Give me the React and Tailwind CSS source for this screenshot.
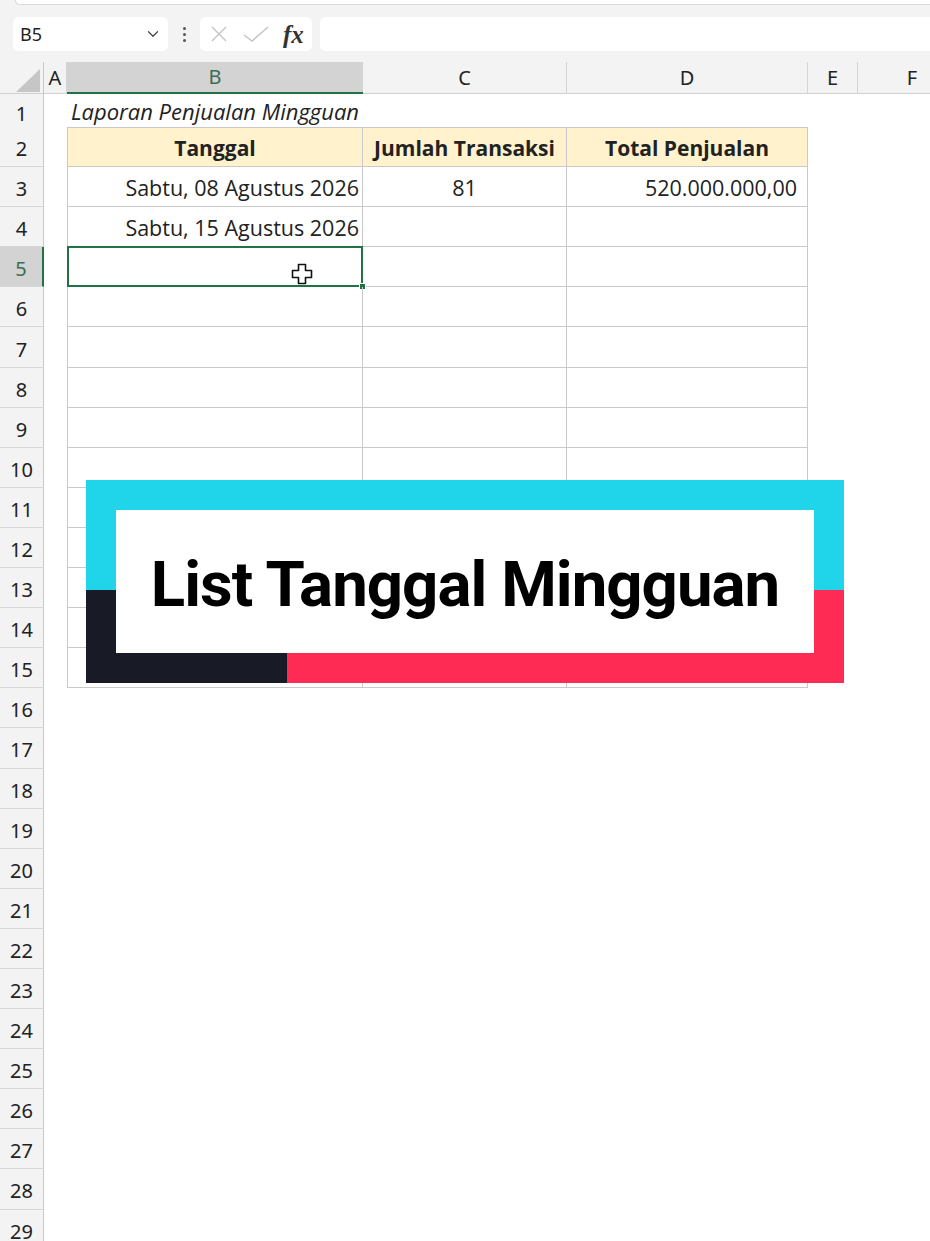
import { ChevronDown } from "lucide-react";

const COLS = "grid grid-cols-[44px_23px_296px_204px_241px_50px_108px]";
const cellFont = { fontFamily: "'Open Sans', sans-serif" };
const uiFont = { fontFamily: "'Noto Sans', 'Open Sans', sans-serif" };

const tableRows = {
  2: { b: "Tanggal", c: "Jumlah Transaksi", d: "Total Penjualan", head: true },
  3: { b: "Sabtu, 08 Agustus 2026", c: "81", d: "520.000.000,00" },
  4: { b: "Sabtu, 15 Agustus 2026", c: "", d: "" },
};

// Toolbar with name box, function buttons and formula bar
const FormulaBar = () => (
  <div className="h-[62px] bg-[#f3f3f3]">
    <div className="ml-[15px] h-[5px] rounded-bl-[10px] border-b border-l border-[#dadada] bg-white" />
    <div className="mt-[12px] flex items-center" style={uiFont}>
      <div className="ml-[13px] flex h-[34px] w-[155px] items-center justify-between rounded-md bg-white pl-[7px] pr-[6px] text-[18px] text-[#222]">
        <span>B5</span>
        <ChevronDown size={18} strokeWidth={1.6} className="text-[#444]" />
      </div>
      <div className="flex w-[32px] flex-col items-center gap-[3px]">
        <span className="h-[3px] w-[3px] rounded-full bg-[#555]" />
        <span className="h-[3px] w-[3px] rounded-full bg-[#555]" />
        <span className="h-[3px] w-[3px] rounded-full bg-[#555]" />
      </div>
      <div className="flex h-[34px] w-[112px] items-center rounded-md bg-white">
        <svg width="18" height="18" viewBox="0 0 18 18" className="ml-[10px]">
          <path d="M2 2 L16 16 M16 2 L2 16" stroke="#c4c4c4" strokeWidth="1.4" fill="none" />
        </svg>
        <svg width="28" height="20" viewBox="0 0 28 20" className="ml-[14px]">
          <path d="M2 11 L10 17 L26 3" stroke="#c4c4c4" strokeWidth="1.4" fill="none" />
        </svg>
        <span
          className="ml-[13px] text-[25px] font-bold italic leading-none text-[#333]"
          style={{ fontFamily: "'Liberation Serif', serif" }}
        >
          fx
        </span>
      </div>
      <div className="ml-[8px] h-[34px] flex-1 rounded-l-md bg-white" />
    </div>
  </div>
);

const ColumnHeaders = () => (
  <div className={`${COLS} h-[32px] border-b border-[#d0d0d0] bg-[#f3f3f3] text-[20px] text-[#222]`} style={uiFont}>
    <div className="relative border-r border-[#c8c8c8]">
      <svg width="24" height="23" viewBox="0 0 24 23" className="absolute bottom-[2px] right-[3px]">
        <polygon points="24,0 24,23 0,23" fill="#c6c6c6" />
      </svg>
    </div>
    <div className="flex items-center justify-center border-r border-[#d5d5d5]">A</div>
    <div className="flex items-center justify-center border-b-2 border-[#217346] bg-[#d3d3d3] text-[#3b6e55]">B</div>
    <div className="flex items-center justify-center border-r border-[#d5d5d5]">C</div>
    <div className="flex items-center justify-center border-r border-[#d5d5d5]">D</div>
    <div className="flex items-center justify-center border-r border-[#d5d5d5]">E</div>
    <div className="flex items-center justify-center">F</div>
  </div>
);

const SelectedCell = () => (
  <>
    <div className="pointer-events-none absolute -left-[1px] -top-[1px] bottom-[-1px] right-[-1px] border-2 border-[#217346]" />
    <div className="absolute bottom-[-4px] right-[-4px] h-[7px] w-[7px] border border-white bg-[#217346]" />
    <svg width="22" height="22" viewBox="0 0 22 22" className="absolute left-[223px] top-[16px]">
      <path
        d="M7.5 1.5 H14.5 V7.5 H20.5 V14.5 H14.5 V20.5 H7.5 V14.5 H1.5 V7.5 H7.5 Z"
        fill="#fff"
        stroke="#111"
        strokeWidth="1.6"
        strokeLinejoin="round"
      />
    </svg>
  </>
);

const Row = ({ n }) => {
  const inTable = n >= 2 && n <= 15;
  const data = tableRows[n];
  const selected = n === 5;
  const h = n === 1 ? "h-[33px]" : "h-[40.1px]";
  const tb = inTable ? "border-r border-b border-[#c9c9c9]" : "";
  const top = n === 2 ? "border-t" : "";
  const bg = data?.head ? "bg-[#fff2cc] font-bold text-[21px]" : "";

  return (
    <div className={`${COLS} ${h} text-[21.5px] text-[#222]`} style={cellFont}>
      <div
        className={`flex items-center justify-center border-b border-[#d7d7d7] pt-[5px] text-[20px] ${
          selected
            ? "border-r-2 border-r-[#217346] bg-[#d3d3d3] text-[#3b6e55]"
            : "border-r border-r-[#c8c8c8] bg-[#f3f3f3]"
        }`}
        style={uiFont}
      >
        {n}
      </div>
      <div />
      <div
        className={`relative flex items-center pt-[3px] ${tb} ${top} ${bg} ${
          inTable ? "border-l" : ""
        } ${data?.head ? "justify-center" : "justify-end pr-[3px]"}`}
      >
        {n === 1 && (
          <span className="absolute left-[4px] top-[1px] whitespace-nowrap text-[22px] italic">Laporan Penjualan Mingguan</span>
        )}
        {data?.b}
        {selected && <SelectedCell />}
      </div>
      <div className={`flex items-center justify-center pt-[3px] ${tb} ${top} ${bg}`}>{data?.c}</div>
      <div
        className={`flex items-center pt-[3px] ${tb} ${top} ${bg} ${
          data?.head ? "justify-center" : "justify-end pr-[10px]"
        }`}
      >
        {data?.d}
      </div>
      <div />
      <div />
    </div>
  );
};

const TitleBanner = () => (
  <div className="absolute left-[86px] top-[480px] flex h-[203px] w-[758px] flex-col">
    <div className="h-[110px] bg-[#20d5ea]" />
    <div className="flex flex-1">
      <div className="w-[201px] bg-[#181a25]" />
      <div className="flex-1 bg-[#fe2c55]" />
    </div>
    <div className="absolute bottom-[30px] left-[30px] right-[30px] top-[30px] flex items-center justify-center bg-white pt-[6px]">
      <span
        className="text-[63.5px] font-bold tracking-[-0.015em] text-black"
        style={{ fontFamily: "Roboto, 'Liberation Sans', sans-serif" }}
      >
        List Tanggal Mingguan
      </span>
    </div>
  </div>
);

export default function App() {
  const rows = Array.from({ length: 29 }, (_, i) => i + 1);
  return (
    <div className="relative h-[1241px] w-[930px] overflow-hidden bg-white">
      <FormulaBar />
      <ColumnHeaders />
      {rows.map((n) => (
        <Row key={n} n={n} />
      ))}
      <TitleBanner />
    </div>
  );
}
